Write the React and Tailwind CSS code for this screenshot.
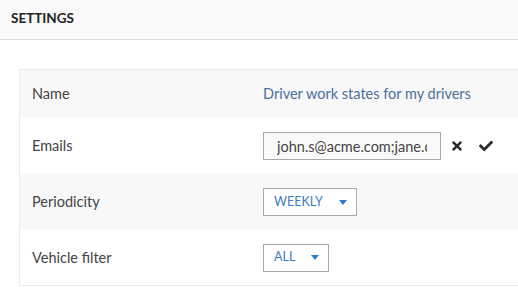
import { FaTimes, FaCheck } from "react-icons/fa";

const Caret = () => (
  <svg width="8" height="5" viewBox="0 0 8 5" className="ml-auto">
    <path d="M0 0h8L4 5z" fill="#2c7bc4" />
  </svg>
);

const Select = ({ value, width }) => (
  <div
    className={`flex items-center h-[28px] border border-[#a9a9a9] bg-white pl-[10px] pr-[9px] text-[12.5px] text-[#3a7bc0] ${width}`}
  >
    <span>{value}</span>
    <Caret />
  </div>
);

const Row = ({ label, children, shaded, height }) => (
  <div className={`flex items-center ${height} ${shaded ? "bg-[#f8f8f8]" : "bg-white"}`}>
    <div className="w-[243px] pl-[12px] text-[14.5px] text-[#444]">{label}</div>
    <div className="flex items-center">{children}</div>
  </div>
);

const App = () => {
  return (
    <div className="min-h-screen bg-white font-['Lato',sans-serif]">
      <div className="h-[40px] flex items-center px-[11px] bg-[#f9f9f9] border-b border-[#dedede]">
        <h1 className="text-[13.5px] font-bold text-[#222] uppercase -mt-[2px]">Settings</h1>
      </div>

      <div className="pt-[29px] pl-[19px]">
        <div className="border border-[#ebebeb] border-r-0">
          <Row label="Name" shaded height="h-[48px]">
            <span className="text-[14.5px] text-[#4d6f9c]">Driver work states for my drivers</span>
          </Row>
          <Row label="Emails" height="h-[56px]">
            <input
              defaultValue="john.s@acme.com;jane.doe@acme.com"
              className="w-[178px] h-[28px] border border-[#a9a9a9] bg-[#f9f9f9] px-[13px] text-[14.5px] text-[#444] outline-none"
            />
            <FaTimes className="ml-[10px] w-[12px] h-[14px] text-[#2b2b2b]" />
            <FaCheck className="ml-[15px] w-[16px] h-[14px] text-[#2b2b2b]" />
          </Row>
          <Row label="Periodicity" shaded height="h-[56px]">
            <Select value="WEEKLY" width="w-[94px]" />
          </Row>
          <Row label="Vehicle filter" height="h-[55px]">
            <Select value="ALL" width="w-[66px]" />
          </Row>
        </div>
      </div>
    </div>
  );
};

export default App;
